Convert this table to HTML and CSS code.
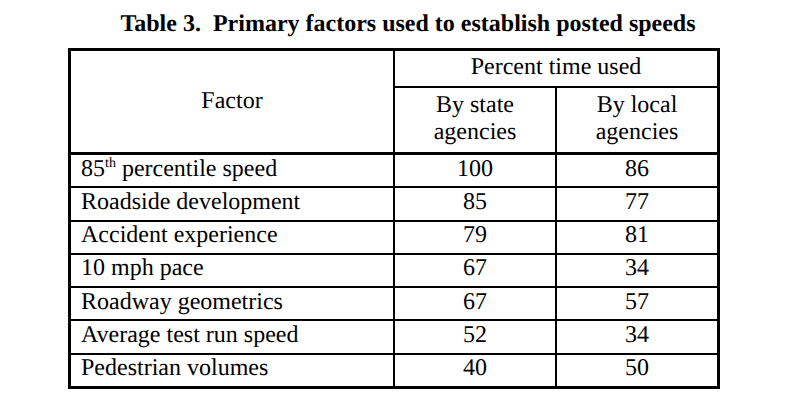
FILE: index.html
```html
<!DOCTYPE html>
<html lang="en">
<head>
<meta charset="utf-8">
<title>Table 3</title>
<link rel="stylesheet" href="styles.css">
</head>
<body>
<h1 class="caption">Table 3.&nbsp; Primary factors used to establish posted speeds</h1>
<div class="table">
  <div class="cell head factor"><span>Factor</span></div>
  <div class="cell head group"><span>Percent time used</span></div>
  <div class="cell head sub"><span>By state<br>agencies</span></div>
  <div class="cell head sub"><span>By local<br>agencies</span></div>

  <div class="cell name"><span>85<sup>th</sup> percentile speed</span></div><div class="cell num"><span>100</span></div><div class="cell num"><span>86</span></div>
  <div class="cell name"><span>Roadside development</span></div><div class="cell num"><span>85</span></div><div class="cell num"><span>77</span></div>
  <div class="cell name"><span>Accident experience</span></div><div class="cell num"><span>79</span></div><div class="cell num"><span>81</span></div>
  <div class="cell name"><span>10 mph pace</span></div><div class="cell num"><span>67</span></div><div class="cell num"><span>34</span></div>
  <div class="cell name"><span>Roadway geometrics</span></div><div class="cell num"><span>67</span></div><div class="cell num"><span>57</span></div>
  <div class="cell name"><span>Average test run speed</span></div><div class="cell num"><span>52</span></div><div class="cell num"><span>34</span></div>
  <div class="cell name"><span>Pedestrian volumes</span></div><div class="cell num"><span>40</span></div><div class="cell num"><span>50</span></div>
</div>
</body>
</html>
```

FILE: styles.css
```css
html, body {
  margin: 0;
  padding: 0;
  background: #fff;
}

body {
  font-family: "Liberation Serif", Times, serif;
  color: #000;
  font-size: 24px;
  text-rendering: geometricPrecision;
}

.caption {
  margin: 0;
  padding: 10px 0 0 26px;
  height: 38px;
  box-sizing: border-box;
  font-size: 24px;
  line-height: 28px;
  font-weight: bold;
  text-align: center;
}

.table {
  margin: 10px 0 0 68px;
  width: 652px;
  height: 341px;
  box-sizing: border-box;
  padding: 3px;
  background: #000;
  display: grid;
  grid-template-columns: 322px 160px 160px;
  grid-template-rows: 35px 65px repeat(7, 1fr);
  gap: 2px;
}

.cell {
  background: #fff;
  display: flex;
  align-items: center;
  line-height: 27px;
  padding-bottom: 3px;
  box-sizing: border-box;
  text-rendering: geometricPrecision;
}

.head {
  justify-content: center;
  text-align: center;
}

.factor {
  grid-row: 1 / span 2;
  margin-bottom: 1px;
  padding-bottom: 0;
}

.group {
  grid-column: 2 / span 2;
}

.sub {
  margin-bottom: 1px;
}

.name {
  padding-left: 10px;
}

.num {
  justify-content: center;
}

sup {
  font-size: 14px;
  line-height: 0;
  vertical-align: 9px;
}
```
